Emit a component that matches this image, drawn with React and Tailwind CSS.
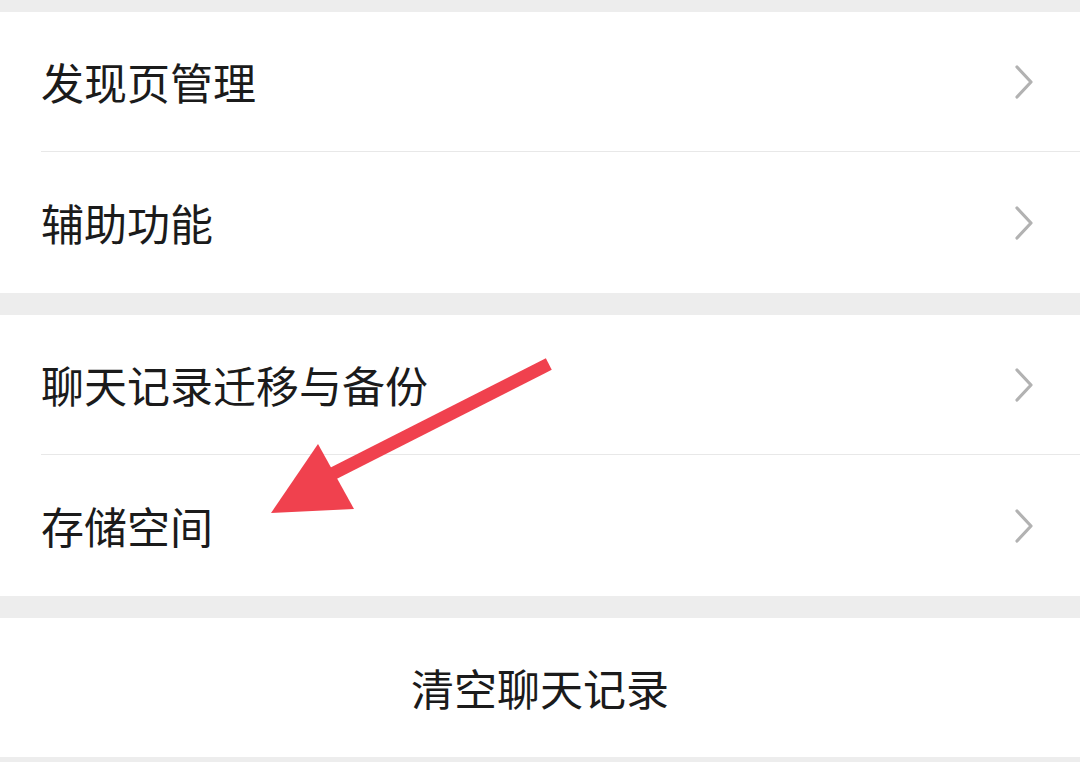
import React from 'react';

const font = { fontFamily: '"Noto Sans CJK SC", "Noto Sans", sans-serif' };

function Chevron() {
  return (
    <svg width="22" height="36" viewBox="0 0 22 36" className="shrink-0">
      <path d="M4 3 L18 18 L4 33" fill="none" stroke="#b2b2b2" strokeWidth="3.2" strokeLinecap="round" strokeLinejoin="round" />
    </svg>
  );
}

function Row({ label, last }) {
  return (
    <div className="pl-[41px]">
      <div className={`flex items-center justify-between pr-[45px] ${last ? 'h-[141px]' : 'h-[140px] border-b border-[#e8e8e8]'}`}>
        <span className="text-[43px] text-[#1b1b1b] leading-none">{label}</span>
        <Chevron />
      </div>
    </div>
  );
}

function Arrow() {
  return (
    <svg className="absolute left-0 top-0 pointer-events-none" width="1080" height="762" viewBox="0 0 1080 762">
      <line x1="543" y1="367" x2="330" y2="475" stroke="#f0414e" strokeWidth="13" strokeLinecap="square" />
      <polygon points="271,513 318,444 354,509" fill="#f0414e" />
    </svg>
  );
}

export default function App() {
  return (
    <div className="relative w-[1080px] h-[762px] overflow-hidden bg-[#ededed]" style={font}>
      <div className="pt-[12px]">
        <div className="bg-white">
          <Row label="发现页管理" />
          <Row label="辅助功能" last />
        </div>
        <div className="h-[22px]" />
        <div className="bg-white">
          <Row label="聊天记录迁移与备份" />
          <Row label="存储空间" last />
        </div>
        <div className="h-[22px]" />
        <div className="bg-white h-[139px] flex items-center justify-center">
          <span className="text-[43px] text-[#1b1b1b] leading-none">清空聊天记录</span>
        </div>
      </div>
      <Arrow />
    </div>
  );
}
